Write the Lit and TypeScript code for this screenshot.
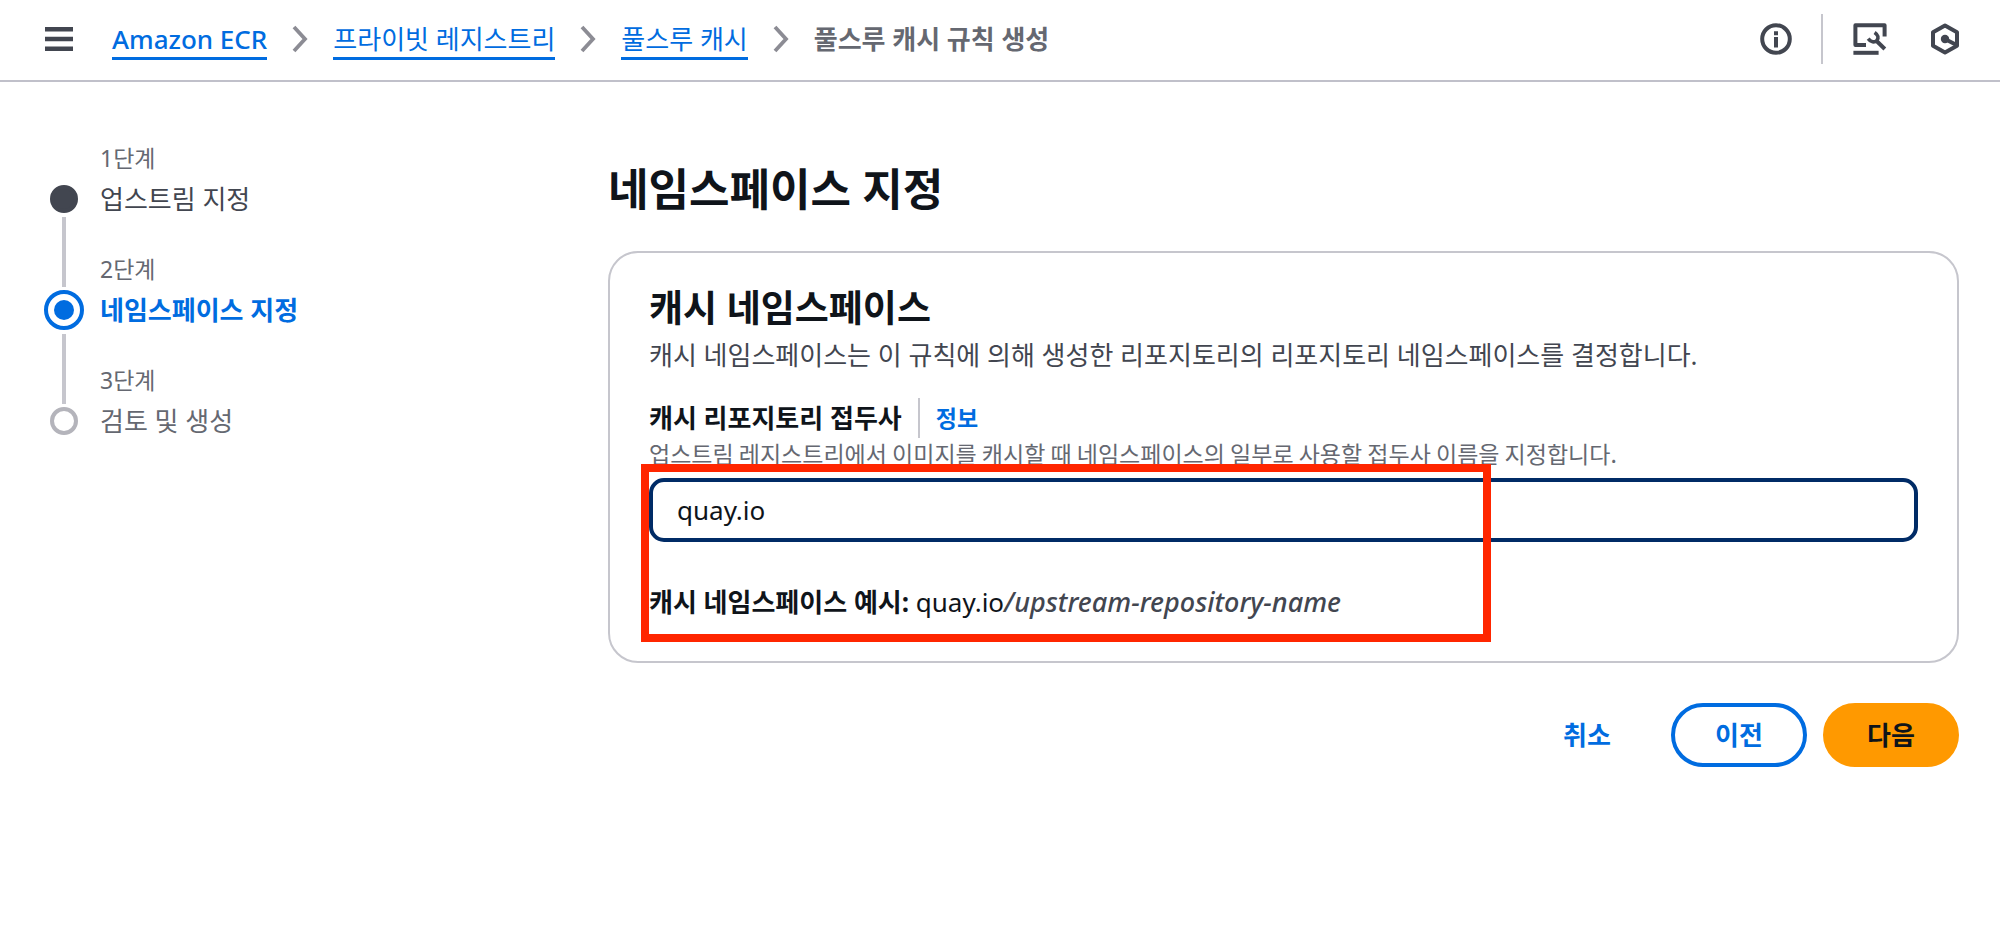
import { LitElement, html, css, svg, nothing } from "lit";
import { customElement, property, state } from "lit/decorators.js";
import { classMap } from "lit/directives/class-map.js";

type StepStatus = "done" | "active" | "pending";

interface Step {
  label: string;
  title: string;
  status: StepStatus;
}

const icons = {
  menu: svg`<svg width="28" height="28" viewBox="0 0 28 28" fill="none" stroke="currentColor" stroke-width="4.4"><path d="M0 4.2H28M0 14H28M0 23.8H28"/></svg>`,
  chevron: svg`<svg width="16" height="28" viewBox="0 0 16 28" fill="none" stroke="currentColor" stroke-width="3.8"><path d="M2 2L13 14L2 26"/></svg>`,
  info: svg`<svg width="32" height="32" viewBox="0 0 32 32"><circle cx="16" cy="16" r="13.8" fill="none" stroke="currentColor" stroke-width="4"/><path d="M14 8.2h4v4h-4zM14 14h4v10.4h-4z" fill="currentColor"/></svg>`,
  tools: svg`<svg width="34" height="32" viewBox="0 0 34 32" fill="none" stroke="currentColor" stroke-width="4"><path d="M13 22H2.4V2.2H31.6V13.6" stroke-linejoin="round"/><path d="M0.4 29.8H25.6"/><path d="M22.6 17L31.8 26"/><path d="M21.6 9.4C25.2 11.8 26 15 23.8 17.4C21.4 19.8 17.8 19.2 15.2 15.6" stroke-width="3.6"/></svg>`,
  hexagon: svg`<svg width="28" height="32" viewBox="0 0 28 32" fill="none" stroke="currentColor" stroke-width="4"><path d="M14 2.4L26 9.2V22.8L14 29.6L2 22.8V9.2Z" stroke-linejoin="round"/><circle cx="14" cy="16" r="4.2" fill="currentColor" stroke="none"/><path d="M14 16L26 22.2"/></svg>`,
};

const shared = css`
  :host {
    font-family: "Noto Sans", "Noto Sans CJK KR", sans-serif;
    font-size: 26px;
    line-height: 36px;
  }
  * {
    box-sizing: border-box;
  }
  a {
    color: #006ce0;
    text-decoration: none;
  }
  button {
    font: inherit;
    cursor: pointer;
  }
  svg {
    display: block;
  }
`;

@customElement("top-bar")
class TopBar extends LitElement {
  static styles = [
    shared,
    css`
      :host {
        display: block;
      }
      .bar {
        display: flex;
        align-items: center;
        justify-content: space-between;
        height: 82px;
        padding: 0 41px 2px 45px;
        border-bottom: 2px solid #c0c0ca;
      }
      .left,
      .crumbs,
      .crumb,
      .right {
        display: flex;
        align-items: center;
      }
      .left {
        gap: 39px;
      }
      .crumbs,
      .crumb {
        gap: 25px;
        margin: 0;
        padding: 0;
        list-style: none;
      }
      .crumb a {
        border-bottom: 3px solid #006ce0;
        line-height: 36px;
        margin-top: 3px;
      }
      .crumb:first-child a {
        font-weight: 500;
      }
      .current {
        color: #656871;
        font-weight: 700;
      }
      .sep {
        color: #8c8c94;
      }
      .icon {
        padding: 0;
        border: 0;
        background: none;
        color: #424650;
      }
      .right {
        gap: 44px;
      }
      .help {
        padding-right: 29px;
        margin-right: -14px;
        height: 50px;
        border-right: 2px solid #c6c6cd;
      }
    `,
  ];

  @property({ attribute: false }) trail: string[] = [];

  render() {
    const last = this.trail.length - 1;
    return html`<header class="bar">
      <div class="left">
        <button class="icon" aria-label="메뉴">${icons.menu}</button>
        <nav>
          <ol class="crumbs">
            ${this.trail.map(
              (name, i) => html`<li class="crumb">
                ${i < last
                  ? html`<a href="#">${name}</a><span class="sep">${icons.chevron}</span>`
                  : html`<span class="current">${name}</span>`}
              </li>`
            )}
          </ol>
        </nav>
      </div>
      <div class="right">
        <button class="icon help" aria-label="정보">${icons.info}</button>
        <button class="icon" aria-label="도구">${icons.tools}</button>
        <button class="icon" aria-label="설정">${icons.hexagon}</button>
      </div>
    </header>`;
  }
}

@customElement("step-list")
class StepList extends LitElement {
  static styles = [
    shared,
    css`
      :host {
        display: block;
      }
      .steps {
        margin: 0;
        padding: 0;
        list-style: none;
      }
      .step {
        display: grid;
        grid-template-columns: 40px 1fr;
        grid-template-rows: 32px 50px 29px;
        column-gap: 16px;
        align-items: center;
      }
      .label {
        grid-column: 2;
        font-size: 23px;
        line-height: 32px;
        color: #656871;
      }
      .mark {
        justify-self: center;
        width: 28px;
        height: 28px;
        border: 4px solid #b4b4bb;
        border-radius: 50%;
      }
      .line {
        justify-self: center;
        width: 4px;
        height: 70px;
        grid-row: 3;
        grid-column: 1;
        background: #c6c6cd;
        align-self: start;
        margin-top: -7px;
        margin-bottom: -40px;
      }
      .title {
        color: #656871;
      }
      .done .mark {
        border-color: #424650;
        background: #424650;
      }
      .done .title {
        color: #424650;
      }
      .active .mark {
        width: 40px;
        height: 40px;
        border-color: #006ce0;
        background: #006ce0;
        background-clip: content-box;
        padding: 6px;
      }
      .active .title {
        color: #006ce0;
        font-weight: 700;
      }
      .active .line {
        margin-top: -1px;
      }
    `,
  ];

  @property({ attribute: false }) steps: Step[] = [];

  render() {
    return html`<ol class="steps">
      ${this.steps.map(
        (s, i) => html`<li class=${classMap({ step: true, [s.status]: true })}>
          <span class="label">${s.label}</span>
          <span class="mark"></span>
          <span class="title">${s.title}</span>
          ${i < this.steps.length - 1 ? html`<span class="line"></span>` : nothing}
        </li>`
      )}
    </ol>`;
  }
}

@customElement("namespace-form")
class NamespaceForm extends LitElement {
  static styles = [
    shared,
    css`
      :host {
        display: block;
        color: #0f141a;
      }
      .card {
        padding: 32px 39px 41px;
        border: 2px solid #c6c6cd;
        border-radius: 30px;
      }
      h2 {
        margin: 0;
        font-size: 37px;
        line-height: 46px;
      }
      .description {
        margin: 6px 0 25px;
        color: #424650;
      }
      .label-row {
        display: flex;
        align-items: center;
        gap: 16px;
        height: 40px;
      }
      label {
        font-weight: 700;
      }
      .info {
        padding-left: 16px;
        border-left: 2px solid #c6c6cd;
        font-size: 23px;
        line-height: 40px;
        font-weight: 700;
      }
      .hint {
        margin: 0;
        color: #656871;
        font-family: "Noto Sans CJK KR", sans-serif;
        font-size: 23px;
        line-height: 31px;
      }
      .marked {
        position: relative;
        margin-top: 9px;
      }
      .frame {
        position: absolute;
        top: -14px;
        bottom: -22px;
        left: -8px;
        width: 67%;
        border: 8px solid #ff2600;
        pointer-events: none;
      }
      input {
        display: block;
        width: 100%;
        height: 64px;
        padding: 0 24px;
        border: 4px solid #002b66;
        border-radius: 15px;
        background: #fff;
        color: inherit;
        font: inherit;
        outline: none;
      }
      .example {
        margin: 42px 0 0;
      }
      em {
        color: #424650;
        font-size: 27px;
        font-weight: 500;
      }
    `,
  ];

  @state() private prefix = "quay.io";

  private onInput(e: Event) {
    this.prefix = (e.target as HTMLInputElement).value;
  }

  render() {
    return html`<section class="card">
      <h2>캐시 네임스페이스</h2>
      <p class="description">캐시 네임스페이스는 이 규칙에 의해 생성한 리포지토리의 리포지토리 네임스페이스를 결정합니다.</p>
      <div class="label-row">
        <label for="prefix">캐시 리포지토리 접두사</label>
        <a class="info" href="#">정보</a>
      </div>
      <p class="hint" id="hint">업스트림 레지스트리에서 이미지를 캐시할 때 네임스페이스의 일부로 사용할 접두사 이름을 지정합니다.</p>
      <div class="marked">
        <input id="prefix" type="text" aria-describedby="hint" .value=${this.prefix} @input=${this.onInput} />
        <p class="example"><strong>캐시 네임스페이스 예시:</strong> ${this.prefix}<em>/upstream-repository-name</em></p>
        <div class="frame"></div>
      </div>
    </section>`;
  }
}

@customElement("app-root")
class AppRoot extends LitElement {
  static styles = [
    shared,
    css`
      :host {
        display: block;
        min-height: 100vh;
        background: #fff;
        color: #0f141a;
      }
      .layout {
        display: grid;
        grid-template-columns: 524px minmax(0, 1fr);
        column-gap: 40px;
        padding: 60px 41px 40px 44px;
      }
      h1 {
        margin: 18px 0 33px;
        font-size: 44px;
        line-height: 58px;
      }
      .actions {
        display: flex;
        justify-content: flex-end;
        gap: 16px;
        margin-top: 40px;
      }
      .btn {
        min-width: 136px;
        height: 64px;
        padding: 0 40px;
        border: 4px solid transparent;
        border-radius: 32px;
        background: transparent;
        color: #006ce0;
        font-weight: 700;
      }
      .normal {
        border-color: #006ce0;
      }
      .primary {
        border-color: #ff9900;
        background: #ff9900;
        color: #0f141a;
      }
    `,
  ];

  private trail = ["Amazon ECR", "프라이빗 레지스트리", "풀스루 캐시", "풀스루 캐시 규칙 생성"];

  private steps: Step[] = [
    { label: "1단계", title: "업스트림 지정", status: "done" },
    { label: "2단계", title: "네임스페이스 지정", status: "active" },
    { label: "3단계", title: "검토 및 생성", status: "pending" },
  ];

  render() {
    return html`<top-bar .trail=${this.trail}></top-bar>
      <div class="layout">
        <step-list .steps=${this.steps}></step-list>
        <main>
          <h1>네임스페이스 지정</h1>
          <namespace-form></namespace-form>
          <div class="actions">
            <button class="btn">취소</button>
            <button class="btn normal">이전</button>
            <button class="btn primary">다음</button>
          </div>
        </main>
      </div>`;
  }
}
